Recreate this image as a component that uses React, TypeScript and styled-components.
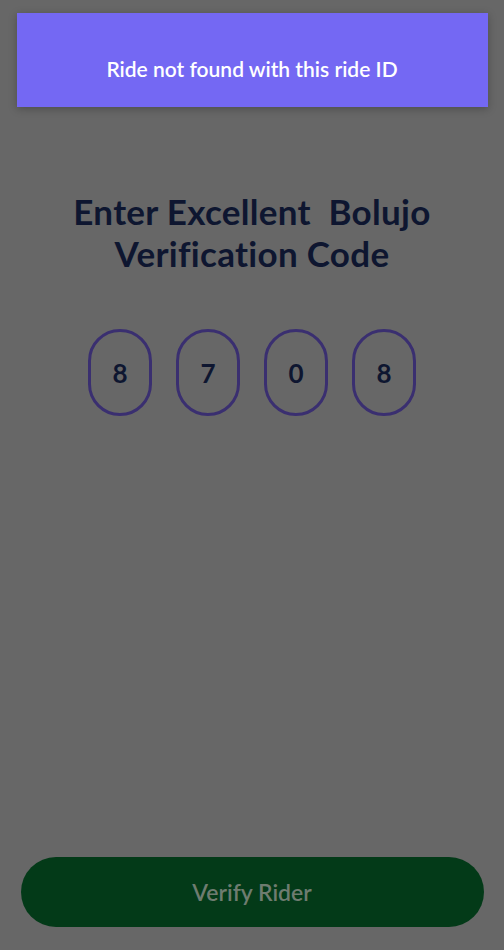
import React from "react";
import styled, { createGlobalStyle } from "styled-components";

const Global = createGlobalStyle`
  html, body { margin: 0; padding: 0; background: #676767; }
  body { font-family: "Lato", "Noto Sans", sans-serif; }
`;

const Screen = styled.div`
  width: 504px;
  height: 950px;
  background: #676767;
  display: flex;
  flex-direction: column;
  align-items: center;
  box-sizing: border-box;
  padding-top: 13px;
`;

const Toast = styled.div`
  width: 471px;
  height: 94px;
  background: #7468f3;
  box-shadow: 0 2px 8px rgba(0, 0, 0, 0.25);
  display: flex;
  align-items: center;
  justify-content: center;
  color: #ffffff;
  font-size: 21px;
  font-weight: 600;
  padding-top: 16px;
  box-sizing: border-box;
`;

const Title = styled.h1`
  margin: 83px 0 0;
  text-align: center;
  font-size: 35px;
  line-height: 42px;
  letter-spacing: 0.3px;
  font-weight: 700;
  color: #0e1630;
  white-space: pre-wrap;
`;

const CodeRow = styled.div`
  display: flex;
  gap: 24px;
  margin-top: 55px;
`;

const Digit = styled.div`
  width: 64px;
  height: 87px;
  box-sizing: border-box;
  border: 3px solid #3a2f70;
  border-radius: 32px;
  display: flex;
  align-items: center;
  justify-content: center;
  font-size: 26px;
  font-weight: 700;
  color: #0e1630;
`;

const Spacer = styled.div`
  flex: 1;
`;

const VerifyButton = styled.button`
  width: 463px;
  height: 70px;
  margin-bottom: 23px;
  border: none;
  border-radius: 35px;
  background: #033a18;
  color: #6e7c70;
  font-family: inherit;
  font-size: 23px;
  font-weight: 600;
`;

export default function App() {
  const code = ["8", "7", "0", "8"];
  return (
    <>
      <Global />
      <Screen>
        <Toast>Ride not found with this ride ID</Toast>
        <Title>{"Enter Excellent  Bolujo\nVerification Code"}</Title>
        <CodeRow>
          {code.map((d, i) => (
            <Digit key={i}>{d}</Digit>
          ))}
        </CodeRow>
        <Spacer />
        <VerifyButton>Verify Rider</VerifyButton>
      </Screen>
    </>
  );
}
